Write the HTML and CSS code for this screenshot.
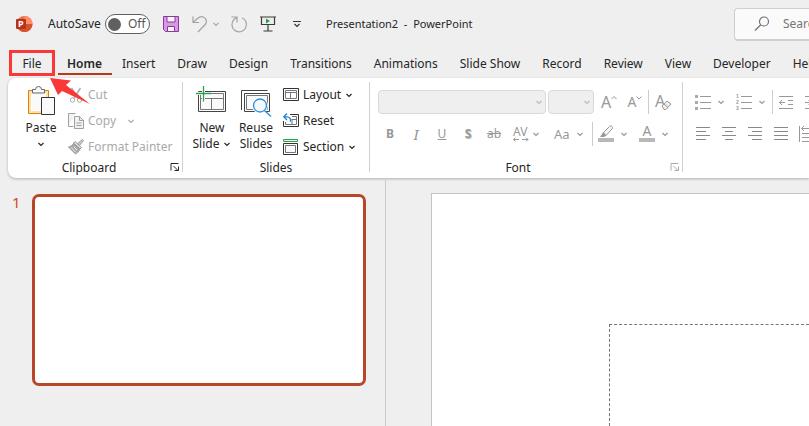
FILE: index.html
```
<!DOCTYPE html>
<html lang="en">
<head>
<meta charset="utf-8">
<title>Presentation2 - PowerPoint</title>
<link rel="stylesheet" href="styles.css">
</head>
<body>
<svg class="defs" aria-hidden="true">
  <symbol id="chev" viewBox="0 0 8 8"><path d="M1.5 3 4 5.5 6.5 3" fill="none" stroke="currentColor" stroke-width="1.2"/></symbol>
  <symbol id="launch" viewBox="0 0 10 10"><path d="M1 8.5V1.500H8.500M3.500 4 8 8.500M8.500 4.500V8.500H4.500" fill="none" stroke="currentColor"/></symbol>
</svg>
<header class="titlebar">
  <svg class="logo" width="18" height="18" viewBox="0 0 18 18">
    <circle cx="9.500" cy="9" r="8" fill="#ed6c47"/><path d="M9.500 1a8 8 0 0 1 8 8h-8z" fill="#ff8f6b"/><path d="M1.500 9h16a8 8 0 0 1-16 0z" fill="#d35230"/>
    <rect x="1" y="4" width="10" height="10" rx="1" fill="#b7341a"/>
    <text x="3" y="12" class="logo-p">P</text>
  </svg>
  <label class="autosave" for="autosave">AutoSave</label>
  <span class="toggle"><input type="checkbox" id="autosave"><span class="knob"></span><span>Off</span></span>
  <button class="tb save" aria-label="Save"><svg width="16" height="16" viewBox="0 0 16 16"><path d="M.5.5h15v15H2.500l-2-2z" fill="#d59be0" stroke="#9332a8"/><path d="M4 .5h8v5.500H4zM4.500 10.500h7v5h-7z" fill="#fafafa" stroke="#9332a8"/></svg></button>
  <button class="tb undo" aria-label="Undo"><svg width="16" height="17" viewBox="0 0 16 17"><path d="M1 .5v6h6M1 6.500 5.500 2.500C8 .3 11 .2 13 2.200c2 2 1.800 4.800-.2 6.800L6 16" fill="none" stroke="#a3a3a3" stroke-width="1.200"/></svg></button>
  <button class="tb more dim" aria-label="Undo history"><svg width="8" height="8"><use href="#chev"/></svg></button>
  <button class="tb redo" aria-label="Redo"><svg width="17" height="17" viewBox="0 0 17 17"><path d="M.5 1h5.500v5.500M6 1.200 3.200 3.200A7.300 7.300 0 1 0 11 1.800" fill="none" stroke="#a3a3a3" stroke-width="1.200"/></svg></button>
  <button class="tb show" aria-label="Start from beginning"><svg width="16" height="16" viewBox="0 0 16 16"><path d="M0 1h16M1.500 1v7.500h13V1M8 8.500v6M3.500 15h9" fill="none" stroke="#3b3b3b" stroke-width="1.200"/><path d="M6 2.500v5L10 5z" fill="#2a9d47"/></svg></button>
  <button class="tb custom" aria-label="Customize toolbar"><svg width="8" height="8" viewBox="0 0 8 8"><path d="M0 1.500h8M1.500 4 4 6.500 6.500 4" fill="none" stroke="#333" stroke-width="1.200"/></svg></button>
  <h1>Presentation2&nbsp; -&nbsp; PowerPoint</h1>
  <label class="search"><svg width="16" height="16" viewBox="0 0 16 16"><circle cx="10" cy="5.500" r="4.500" fill="none" stroke="#707070" stroke-width="1.200"/><path d="M6.800 8.800 1 14.500" stroke="#707070" stroke-width="1.200"/></svg><input type="text" placeholder="Search" aria-label="Search"></label>
</header>
<nav class="tabs">
  <a href="#" class="file">File</a><a href="#" class="active">Home</a><a href="#">Insert</a><a href="#">Draw</a><a href="#">Design</a><a href="#">Transitions</a><a href="#">Animations</a><a href="#">Slide Show</a><a href="#">Record</a><a href="#">Review</a><a href="#">View</a><a href="#">Developer</a><a href="#">Help</a>
  <svg class="pointer" width="46" height="32" viewBox="0 0 46 32"><path d="M3 3 24 5.500 19 10 43 29 15 16 11 20z" fill="#fb3838"/></svg>
</nav>
<main>
<div class="ribbon">
  <section class="group clipboard">
    <div class="body">
      <button class="big"><span class="pic"><svg width="30" height="32" viewBox="0 0 30 32"><path d="M2.500 5.500h20v23h-20z" fill="#fbe3a4" stroke="#e07a14"/><path d="M5 8h15v18H5z" fill="#fafafa"/><path d="M6.500 8V4.500h3a3 3 0 0 1 6 0h3V8z" fill="#fafafa" stroke="#666"/><path d="M15.500 12.500h13v17h-13z" fill="#fafafa" stroke="#333"/></svg></span><span>Paste</span><svg class="c" width="8" height="16" viewBox="0 -4 8 16"><use href="#chev" width="8" height="8"/></svg></button>
      <div class="stack dim">
        <button><svg width="16" height="16" viewBox="0 0 16 16"><path d="M3.500 1 10 11M12.500 1 6 11" fill="none" stroke="#aaa" stroke-width="1.500"/><circle cx="4.500" cy="13" r="2.200" fill="none" stroke="#aaa"/><circle cx="11.500" cy="13" r="2.200" fill="none" stroke="#aaa"/></svg>Cut</button>
        <button><svg width="16" height="16" viewBox="0 0 16 16"><path d="M.5 13.500V.5h7M.5 13.500h5M6.500 3.500h5l4 4v8h-9z" fill="#f1f1f1" stroke="#a0a0a0"/><path d="M11.500 3.500v4h4M8.500 10h5M8.500 12.500h5" fill="none" stroke="#a0a0a0"/></svg>Copy<svg class="far" width="8" height="8"><use href="#chev"/></svg></button>
        <button><svg width="16" height="16" viewBox="0 0 16 16"><path d="m14.500.5 1 1-4 5-2-2z" fill="#ccc" stroke="#999"/><path d="m7 2.500 6.500 6-1.500 1.500-6.500-6z" fill="#ddd" stroke="#999"/><path d="M5.500 4.500 12 10c-1 2.500-3 4-4.500 5L.5 8c2-.5 4-1.500 5-3.500z" fill="#aaa" stroke="#999"/><path d="m3 8.500 5 5M6 8l3 3" stroke="#eee"/></svg>Format Painter</button>
      </div>
    </div>
    <footer><span>Clipboard</span><button class="launch" aria-label="Clipboard settings"><svg width="10" height="10"><use href="#launch"/></svg></button></footer>
  </section>
  <section class="group slides">
    <div class="body">
      <button class="big"><span class="pic"><svg width="32" height="30" viewBox="0 0 32 30"><path d="M2.500 5.500h27v20h-27z" fill="#fff" stroke="#444"/><path d="M4.500 7.500h23v16h-23zM4.500 12.500h23M15.500 12.500v11" fill="#fafafa" stroke="#777"/><path d="M7.500 0v15.500M0 7.500h15" stroke="#fff" stroke-width="3"/><path d="M7.500 0v15.500M0 7.500h15" stroke="#2ba04c" stroke-width="1.300"/></svg></span><span>New</span><span>Slide<svg class="c" width="8" height="8"><use href="#chev"/></svg></span></button>
      <button class="big"><span class="pic"><svg width="32" height="30" viewBox="0 0 32 30"><path d="M1.500 24V4.500h26" fill="none" stroke="#444"/><path d="M4.500 7.500h25v18h-25z" fill="#fff" stroke="#444"/><path d="M6.500 9.500h21v14h-21z" fill="#fafafa" stroke="#777"/><circle cx="20" cy="19.500" r="6.500" fill="#f2f8fd" stroke="#fff" stroke-width="3"/><circle cx="20" cy="19.500" r="6.500" fill="#f2f8fd" stroke="#2f8fd8" stroke-width="1.300"/><path d="m24.500 24.500 6.500 6" stroke="#2f8fd8" stroke-width="1.400"/></svg></span><span>Reuse</span><span>Slides</span></button>
      <div class="stack">
        <button><svg width="16" height="16" viewBox="0 0 16 16"><path d="M.5 1.500h15v12H.5z" fill="#fff" stroke="#333"/><path d="M2.500 3.500h11v8h-11zM2.500 5.500h11M7.500 5.500v6" fill="none" stroke="#777"/></svg>Layout<svg class="c" width="8" height="8"><use href="#chev"/></svg></button>
        <button><svg width="16" height="16" viewBox="0 0 16 16"><path d="M7 1.500h8.500v12H.5V8" fill="none" stroke="#333"/><path d="M9 3.500h4.500v8h-11V9M9 6.500h4M9 6v5" fill="none" stroke="#777"/><path d="M4 .5.800 3.800 4 7M1 3.800h3c2.500 0 4 2 3.500 5" fill="none" stroke="#1f83d3" stroke-width="1.300"/></svg>Reset</button>
        <button><svg width="16" height="16" viewBox="0 0 16 16"><path d="M.5.500h14v2H.5z" fill="#e8f6eb" stroke="#2ba04c"/><path d="M.5 4.500h14v11H.5z" fill="#fff" stroke="#333"/><path d="M2.500 6.500h10v7h-10z" fill="#fafafa" stroke="#777"/></svg>Section<svg class="c" width="8" height="8"><use href="#chev"/></svg></button>
      </div>
    </div>
    <footer><span>Slides</span></footer>
  </section>
  <section class="group font">
    <div class="rows">
      <div class="row">
        <button class="combo face" aria-label="Font"><svg width="8" height="8"><use href="#chev"/></svg></button>
        <button class="combo size" aria-label="Font size"><svg width="8" height="8"><use href="#chev"/></svg></button>
        <button class="w26" aria-label="Increase font size"><span class="lg">A</span><svg class="sup" width="6" height="6" viewBox="0 0 6 6"><path d="M.5 4 3 1.500 5.500 4" fill="none" stroke="currentColor"/></svg></button>
        <button class="w26" aria-label="Decrease font size"><span class="md">A</span><svg class="sup" width="6" height="6" viewBox="0 0 6 6"><path d="M.5 1.500 3 4l2.500-2.500" fill="none" stroke="currentColor"/></svg></button>
        <i class="vr"></i>
        <button class="w26 clear" aria-label="Clear formatting"><svg width="17" height="18" viewBox="0 0 17 18"><text x="0" y="14" font-size="16">A</text><path d="m7 13 5-5 4 3-5 5.500H9z" fill="#eee" stroke="#999"/><path d="m9 11 4 3.500" stroke="#999"/></svg></button>
      </div>
      <div class="row">
        <button class="w26"><b>B</b></button>
        <button class="w26 ital">I</button>
        <button class="w26"><u>U</u></button>
        <button class="w26 shadow">S</button>
        <button class="w26"><s>ab</s></button>
        <button class="drop av" aria-label="Character spacing"><svg width="18" height="18" viewBox="0 0 18 18"><text x="1" y="11" font-size="12">AV</text><path d="M7 14.500H1.500m2-2-2 2 2 2M10 14.500h6m-2-2 2 2-2 2" fill="none" stroke="currentColor"/></svg><svg width="8" height="8"><use href="#chev"/></svg></button>
        <button class="drop case">Aa<svg width="8" height="8"><use href="#chev"/></svg></button>
        <i class="vr"></i>
        <button class="drop" aria-label="Highlight"><svg width="16" height="18" viewBox="0 0 16 18"><path d="M0 13h16v4H0z" fill="#b8b8b8"/><path d="m5 8 6.500-6.500c2-1.500 4 .5 2.500 2.500L8 10.500H5.500z" fill="#f5f5f5" stroke="#999"/><path d="M5.500 7 8.500 10.500 6 12H2z" fill="#999"/></svg><svg width="8" height="8"><use href="#chev"/></svg></button>
        <button class="drop" aria-label="Font color"><svg width="16" height="18" viewBox="0 0 16 18"><path d="M0 13h16v4H0z" fill="#b8b8b8"/><text x="3.500" y="11" font-size="14">A</text></svg><svg width="8" height="8"><use href="#chev"/></svg></button>
      </div>
    </div>
    <footer><span>Font</span><button class="launch dim" aria-label="Font settings"><svg width="10" height="10"><use href="#launch"/></svg></button></footer>
  </section>
  <section class="group para">
    <div class="rows">
      <div class="row">
        <button class="drop" aria-label="Bullets"><svg width="16" height="16" viewBox="0 0 16 16"><path d="M0 1h3v3H0zM0 7h3v3H0zM0 13h3v3H0z" fill="#aaa"/><path d="M5 2.500h11M5 8.500h11M5 14.500h11" stroke="#999"/></svg><svg width="8" height="8"><use href="#chev"/></svg></button>
        <button class="drop" aria-label="Numbering"><svg width="16" height="16" viewBox="0 0 16 16"><text x="0" y="4" class="num">1</text><text x="0" y="10" class="num">2</text><text x="0" y="16" class="num">3</text><path d="M5 2.500h11M5 8.500h11M5 14.500h11" stroke="#999"/></svg><svg width="8" height="8"><use href="#chev"/></svg></button>
        <i class="vr"></i>
        <button class="w26" aria-label="Decrease indent"><svg width="16" height="16" viewBox="0 0 16 16"><path d="M1 2.500h14M10 6.500h5M10 10.500h5M1 14.500h14M7 8.500H1.500m2.500-2.500-2.500 2.500L4 11" fill="none" stroke="#999"/></svg></button>
        <button class="w26" aria-label="Increase indent"><svg width="16" height="16" viewBox="0 0 16 16"><path d="M1 2.500h14M10 6.500h5M10 10.500h5M1 14.500h14M1 8.500h6m-2.500-2.500 2.500 2.500L4.500 11" fill="none" stroke="#999"/></svg></button>
      </div>
      <div class="row">
        <button class="w26" aria-label="Align left"><svg width="14" height="14" viewBox="0 0 14 14"><path d="M0 .5h14M0 4.500h10M0 8.500h14M0 12.500h10" stroke="#888"/></svg></button>
        <button class="w26" aria-label="Center"><svg width="14" height="14" viewBox="0 0 14 14"><path d="M0 .5h14M3 4.500h8M0 8.500h14M3 12.500h8" stroke="#888"/></svg></button>
        <button class="w26" aria-label="Align right"><svg width="14" height="14" viewBox="0 0 14 14"><path d="M0 .5h14M4 4.500h10M0 8.500h14M4 12.500h10" stroke="#888"/></svg></button>
        <button class="w26" aria-label="Justify"><svg width="14" height="14" viewBox="0 0 14 14"><path d="M0 .5h14M0 4.500h14M0 8.500h14M0 12.500h14" stroke="#888"/></svg></button>
        <button class="w26" aria-label="Columns"><svg width="16" height="16" viewBox="0 0 16 16"><path d="M.5 0v16M3 2.500h12m-10-2.500-2.500 2.500L5 5M3 7.500h12M3 11.500h12M3 15.500h12" fill="none" stroke="#999"/></svg></button>
      </div>
    </div>
  </section>
</div>
<div class="workspace">
  <aside class="thumbs"><span>1</span><button class="thumb" aria-label="Slide 1"></button></aside>
  <section class="canvas"><div class="slide"><div class="placeholder"></div></div></section>
</div>
</main>
</body>
</html>
```

FILE: styles.css
```
* { box-sizing: border-box; }
html, body { height: 100%; }
body {
  margin: 0;
  overflow: hidden;
  display: flex;
  flex-direction: column;
  background: #efefef;
  color: #262626;
  font: 12px/16px "Noto Sans", sans-serif;
}
button {
  margin: 0;
  padding: 0;
  border: 0;
  background: none;
  color: inherit;
  font: inherit;
  white-space: nowrap;
}
svg { display: block; flex: none; overflow: visible; }
.defs { position: absolute; width: 0; height: 0; }
.dim { color: #aaa; }

.titlebar { display: flex; align-items: center; height: 48px; padding-left: 15px; flex: none; }
.logo-p { font: bold 9px "Noto Sans", sans-serif; fill: #fff; }
.autosave { margin-left: 15px; width: 57px; flex: none; }
.toggle {
  position: relative;
  display: flex;
  align-items: center;
  gap: 7px;
  flex: none;
  width: 45px;
  height: 20px;
  padding-left: 2px;
  border: 1px solid #606060;
  border-radius: 10px;
  background: #fff;
  color: #555;
}
.toggle input { position: absolute; inset: 0; margin: 0; opacity: 0; }
.knob { width: 13px; height: 13px; border-radius: 50%; background: #606060; }
.tb { flex: none; }
.save { margin-left: 13px; }
.undo { margin-left: 13px; }
.more { margin-left: 4px; }
.redo { margin-left: 11px; }
.show { margin-left: 12px; }
.custom { margin-left: 17px; }
h1 { margin: 0 0 0 25px; font: inherit; font-size: 11px; white-space: nowrap; width: 383px; flex: none; }
.search {
  display: flex;
  align-items: center;
  gap: 13px;
  flex: 1;
  min-width: 0;
  height: 33px;
  margin-left: 25px;
  padding-left: 19px;
  border: 1px solid #cfcfcf;
  border-width: 1px 0 2px 1px;
  border-radius: 4px 0 0 4px;
  background: #fafafa;
}
.search input { flex: 1; min-width: 0; border: 0; padding: 0; background: none; font: inherit; outline: 0; }
.search input::placeholder { color: #757575; opacity: 1; }

.tabs { position: relative; display: flex; height: 30px; padding: 2px 0 2px 9px; flex: none; white-space: nowrap; }
.tabs a { flex: none; margin-right: 22px; line-height: 28px; color: inherit; text-decoration: none; }
.tabs a:last-of-type { margin: 0; flex: 0 1 auto; min-width: 0; overflow: hidden; }
.tabs .file { width: 46px; margin-right: 3px; border: 3px solid #fb3838; line-height: 22px; text-align: center; }
.tabs .active { padding: 0 10px 0 9px; margin-right: 10px; border-bottom: 2px solid #b53a1d; height: 25px; font-weight: 600; }
.pointer { position: absolute; left: 47px; top: 27px; z-index: 2; }

main { flex: 1; min-height: 0; display: flex; flex-direction: column; }
.ribbon {
  display: flex;
  flex: none;
  height: 100px;
  margin-left: 8px;
  padding-top: 4px;
  border-radius: 8px 0 0 8px;
  background: #fff;
  box-shadow: 0 1px 3px #0004;
}
.group { position: relative; flex: none; border-right: 1px solid #d0d0d0; margin-bottom: 6px; }
.body { display: flex; height: 78px; padding-left: 8px; }
.clipboard { width: 175px; }
.slides { width: 187px; }
.slides .body { padding-left: 7px; }
.font { width: 313px; color: #999; }
.para { flex: 1; min-width: 0; overflow: hidden; border: 0; color: #999; }
.group footer { height: 16px; text-align: center; color: #262626; }
.clipboard footer { padding-right: 12px; }
.font footer { padding-right: 16px; }
.launch { position: absolute; right: 2px; bottom: 0; }
.launch.dim { color: #aaa; }
.big { display: flex; flex-direction: column; align-items: center; width: 44px; }
.clipboard .big { width: 50px; }
.pic { display: flex; align-items: center; height: 38px; }
.big > span:last-child { display: flex; align-items: center; }
.c { margin-left: 4px; }
.big > .c { margin: 0; }
.stack { display: grid; grid-template-rows: repeat(3, 26px); justify-items: start; margin-left: 2px; }
.slides .stack { margin-left: 5px; }
.stack button { display: flex; align-items: center; gap: 4px; }
.stack .c { margin-left: 0; }
.stack .far { margin-left: 7px; }

.rows { height: 78px; padding: 4px 0 0 7px; }
.row { display: flex; align-items: center; height: 32px; }
.combo { display: flex; align-items: center; justify-content: flex-end; height: 24px; padding-right: 2px; border: 1px solid #d9d9d9; border-radius: 4px; background: #efefef; color: #bbb; }
.face { width: 168px; margin: 0 2px 0 1px; }
.size { width: 46px; margin-right: 2px; }
.w26 { display: flex; align-items: center; justify-content: center; width: 26px; height: 26px; flex: none; }
.lg { font-size: 16px; }
.md { font-size: 14px; }
.sup { margin-bottom: 9px; }
.vr { width: 1px; height: 24px; background: #ccc; flex: none; }
.clear { width: 29px; }
.ital { font: italic 14px "Noto Serif", "Liberation Serif", serif; }
.shadow { font-weight: bold; text-shadow: 1px 1px 1px #bbb; }
.row text { fill: currentColor; font-family: "Noto Sans", sans-serif; }
.row .num { font: bold 5px "Liberation Sans", sans-serif; }
.drop { display: flex; align-items: center; gap: 6px; width: 41px; height: 26px; padding-left: 5px; flex: none; }
.av { gap: 2px; }
.case { width: 44px; font-size: 13px; padding-left: 6px; }

.workspace { display: flex; flex: 1; min-height: 0; padding-top: 2px; }
.thumbs { display: flex; align-items: flex-start; width: 386px; padding: 14px 19px 0 12px; border-right: 1px solid #cacaca; flex: none; }
.thumbs span { width: 20px; flex: none; color: #d0492b; font-size: 15px; }
.thumb { flex: 1; aspect-ratio: 334 / 192; border: 3px solid #b8472a; border-radius: 7px; background: #fff; }
.canvas { flex: 1; padding: 13px 0 0 45px; }
.slide { height: 100%; padding: 130px 0 0 177px; border: 1px solid #c4c4c4; border-width: 1px 0 0 1px; background: #fff; }
.placeholder { height: 100%; border: 1px dashed #777; border-width: 1px 0 0 1px; }
```
